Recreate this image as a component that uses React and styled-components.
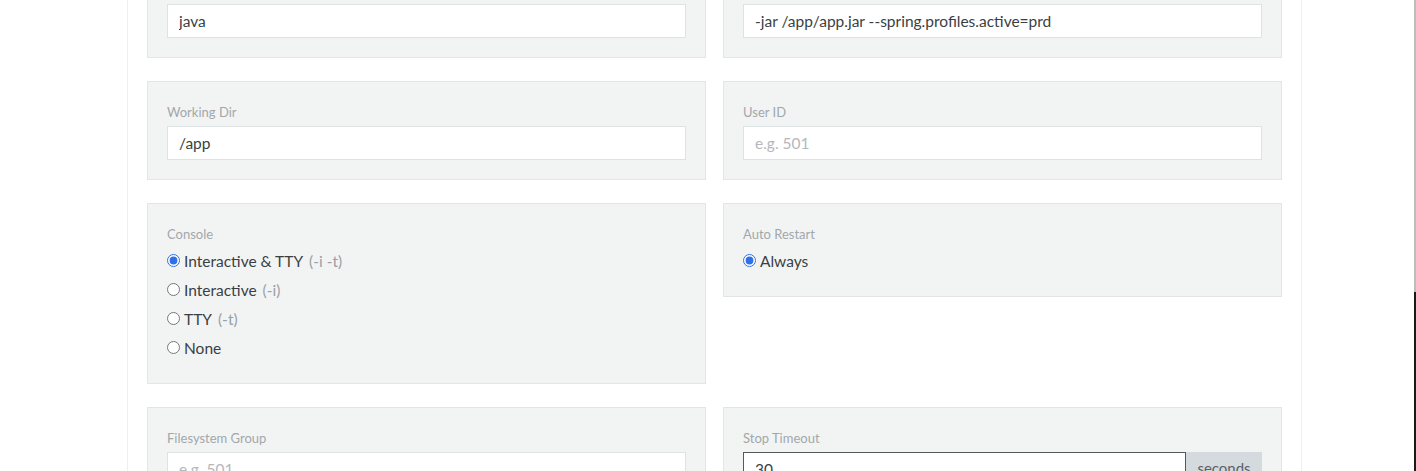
import styled, { createGlobalStyle } from 'styled-components'

const GlobalStyle = createGlobalStyle`
  html, body {
    margin: 0;
    padding: 0;
    background: #ffffff;
    overflow: hidden;
  }
  body {
    font-family: Lato, "Open Sans", sans-serif;
    color: #3a3f44;
  }
`

const Page = styled.div`
  height: 471px;
  overflow: hidden;
  padding-left: 127px;
`

const Container = styled.div`
  width: 1135px;
  margin-top: -41px;
  padding: 0 19px 40px 19px;
  border-left: 1px solid #eef0f1;
  border-right: 1px solid #eef0f1;
`

const Grid = styled.div`
  display: grid;
  grid-template-columns: 559px 559px;
  column-gap: 17px;
  row-gap: 23px;
  align-items: start;
`

const Card = styled.div`
  background: #f2f4f4;
  border: 1px solid #e2e6e8;
  padding: 22px 19px 19px 19px;
`

const Label = styled.div`
  font-size: 13px;
  color: #a2a7ab;
  height: 16px;
  line-height: 16px;
  margin-bottom: 6px;
`

const Input = styled.input`
  display: block;
  box-sizing: border-box;
  width: 100%;
  height: 34px;
  padding: 0 11px;
  font-family: Lato, "Open Sans", sans-serif;
  font-size: 15.5px;
  color: #3a3f44;
  background: #ffffff;
  border: 1px solid ${p => (p.$focused ? '#55595c' : '#dde2e5')};
  border-radius: 0;
  outline: none;
  &::placeholder {
    color: #b4b8bb;
  }
`

const InputGroup = styled.div`
  display: flex;
  & > input {
    flex: 1;
  }
`

const Addon = styled.span`
  display: flex;
  align-items: center;
  justify-content: center;
  width: 76px;
  box-sizing: border-box;
  padding-bottom: 3px;
  background: #d4dadd;
  border: 1px solid #d4dadd;
  font-size: 15px;
  color: #5b6166;
`

const RadioList = styled.div`
  display: flex;
  flex-direction: column;
  gap: 10px;
  padding-top: 3px;
  padding-bottom: ${p => p.$tail}px;
`

const RadioRow = styled.label`
  display: flex;
  align-items: center;
  height: 19px;
  font-size: 15.5px;
  color: #3a3f44;
`

const Radio = styled.input.attrs({ type: 'radio' })`
  width: 13px;
  height: 13px;
  margin: 0 4px 0 0;
  accent-color: #2f6fe8;
`

const Hint = styled.span`
  color: #9aa0a4;
  margin-left: 6px;
`

const ScrollEdge = styled.div`
  position: fixed;
  top: 0;
  right: 0;
  width: 2px;
  height: 100%;
  background: linear-gradient(#bdbdbd 0 292px, #1a1a1a 292px);
`

const consoleOptions = [
  { label: 'Interactive & TTY', hint: '(-i -t)', checked: true },
  { label: 'Interactive', hint: '(-i)' },
  { label: 'TTY', hint: '(-t)' },
  { label: 'None' },
]

const App = () => {
  return (
    <>
      <GlobalStyle />
      <Page>
        <Container>
          <Grid>
            <Card>
              <Label>Command</Label>
              <Input defaultValue="java" readOnly />
            </Card>
            <Card>
              <Label>Arguments</Label>
              <Input defaultValue="-jar /app/app.jar --spring.profiles.active=prd" readOnly />
            </Card>
            <Card>
              <Label>Working Dir</Label>
              <Input defaultValue="/app" readOnly />
            </Card>
            <Card>
              <Label>User ID</Label>
              <Input placeholder="e.g. 501" readOnly />
            </Card>
            <Card>
              <Label>Console</Label>
              <RadioList $tail={7}>
                {consoleOptions.map(o => (
                  <RadioRow key={o.label}>
                    <Radio name="console" defaultChecked={o.checked} />
                    {o.label}
                    {o.hint && <Hint>{o.hint}</Hint>}
                  </RadioRow>
                ))}
              </RadioList>
            </Card>
            <Card>
              <Label>Auto Restart</Label>
              <RadioList $tail={7}>
                <RadioRow>
                  <Radio name="restart" defaultChecked />
                  Always
                </RadioRow>
              </RadioList>
            </Card>
            <Card>
              <Label>Filesystem Group</Label>
              <Input placeholder="e.g. 501" readOnly />
            </Card>
            <Card>
              <Label>Stop Timeout</Label>
              <InputGroup>
                <Input $focused defaultValue="30" readOnly />
                <Addon>seconds</Addon>
              </InputGroup>
            </Card>
          </Grid>
        </Container>
      </Page>
      <ScrollEdge />
    </>
  )
}

export default App
